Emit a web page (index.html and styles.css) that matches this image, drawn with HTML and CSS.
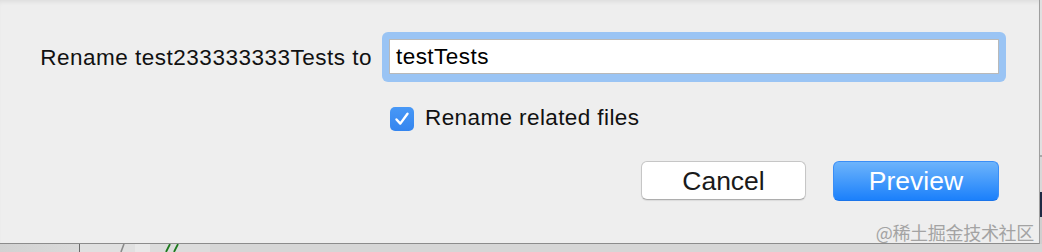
FILE: index.html
```html
<!DOCTYPE html>
<html>
<head>
<meta charset="utf-8">
<link rel="stylesheet" href="styles.css">
</head>
<body>
<div class="screen">
  <div class="top">
    <div class="dialog">
      <div class="rename-row">
        <label class="rename-label">Rename test233333333Tests to</label>
        <div class="focus-ring"><div class="field">testTests</div></div>
      </div>
      <div class="check-row">
        <span class="checkbox"><svg width="24" height="24" viewBox="0 0 24 24"><path d="M6.5 12.5 L10.3 16.6 L17.5 6.8" fill="none" stroke="#fff" stroke-width="2.4" stroke-linecap="round" stroke-linejoin="round"/></svg></span>
        <span class="check-label">Rename related files</span>
      </div>
      <div class="button-row">
        <button class="btn btn-cancel">Cancel</button>
        <button class="btn btn-primary">Preview</button>
      </div>
      <div class="watermark">@稀土掘金技术社区</div>
    </div>
    <div class="side-strip">
      <div class="side-a"></div>
      <div class="side-line"></div>
      <div class="side-b"></div>
      <div class="side-dark"></div>
      <div class="side-c"></div>
    </div>
  </div>
  <div class="under-strip">
    <div class="seg seg-a"></div>
    <div class="seg seg-line"></div>
    <div class="seg seg-b"><svg width="55" height="8" viewBox="0 0 55 8"><path d="M44 0 L41 8" stroke="#8a8a8a" stroke-width="1.6"/></svg></div>
    <div class="seg seg-c"></div>
    <div class="seg seg-d"><svg width="60" height="8" viewBox="0 0 60 8"><path d="M20 0 L16 8 M28 0 L24 8" stroke="#1d7a1d" stroke-width="1.8"/></svg></div>
    <div class="seg seg-e"></div>
  </div>
</div>
</body>
</html>
```

FILE: styles.css
```css
html, body {
  margin: 0;
  padding: 0;
}
body {
  width: 1042px;
  height: 252px;
  overflow: hidden;
  background: #d6d6d6;
  font-family: "Liberation Sans", Arial, sans-serif;
  color: #111;
}
.screen {
  display: flex;
  flex-direction: column;
}
.top {
  display: flex;
}
.dialog {
  position: relative;
  width: 1040px;
  height: 244px;
  box-sizing: border-box;
  background: #eeeeee;
  border-right: 1px solid #9e9e9e;
  border-bottom: 1px solid #8c8c8c;
  box-shadow: inset 0 4px 4px -2px rgba(0,0,0,0.07);
  display: flex;
  flex-direction: column;
  padding-top: 32px;
}
.rename-row {
  display: grid;
  grid-template-columns: 382px 624px;
  align-items: center;
}
.rename-label {
  justify-self: end;
  padding-right: 10px;
  font-size: 22.5px;
  letter-spacing: 0.5px;
  line-height: 26px;
  color: #111;
  position: relative;
  top: 1px;
  white-space: nowrap;
}
.focus-ring {
  background: #9ac4f4;
  border-radius: 6px;
  padding: 7px 7px 8px 7px;
}
.field {
  background: #fff;
  border: 1px solid #b9b9b9;
  height: 33px;
  box-sizing: content-box;
  font-size: 22.5px;
  letter-spacing: 0.45px;
  line-height: 33px;
  padding-left: 6px;
  color: #000;
}
.check-row {
  display: flex;
  align-items: center;
  margin-top: 24px;
  margin-left: 390px;
  gap: 11px;
}
.checkbox {
  width: 24px;
  height: 24px;
  border-radius: 5px;
  background: linear-gradient(#4898f6, #3485ef);
  display: flex;
}
.check-label {
  font-size: 22.5px;
  letter-spacing: 0.4px;
  line-height: 26px;
  color: #111;
  position: relative;
  top: -1px;
}
.button-row {
  display: flex;
  justify-content: flex-end;
  gap: 27px;
  margin-top: 29px;
  padding-right: 40px;
}
.btn {
  font-family: "Liberation Sans", Arial, sans-serif;
  font-size: 26.5px;
  padding: 0;
  margin: 0;
  border-radius: 6px;
  box-sizing: border-box;
  line-height: 36px;
}
.btn-cancel {
  width: 165px;
  height: 39px;
  background: #fff;
  border: 1px solid #c6c6c6;
  border-bottom-color: #adadad;
  box-shadow: 0 1px 1px rgba(0,0,0,0.08);
  color: #1a1a1a;
}
.btn-primary {
  width: 166px;
  height: 40px;
  background: linear-gradient(#6db4fb, #1b80fb);
  border: 1px solid #3a8ef6;
  border-bottom-color: #1a74ea;
  color: #fff;
}
.watermark {
  position: absolute;
  right: 5px;
  bottom: 1px;
  font-family: "Noto Sans CJK SC", "Liberation Sans", sans-serif;
  font-size: 18px;
  line-height: 20px;
  color: #a3a3a3;
  letter-spacing: -0.3px;
}
.side-strip {
  width: 2px;
  display: flex;
  flex-direction: column;
  background: #d2d2d2;
}
.side-a { height: 155px; background: #e0e0e0; }
.side-line { height: 2px; background: #a8a8a8; }
.side-b { height: 35px; background: #d8d8d8; }
.side-dark { height: 25px; background: #1f2a44; }
.side-c { flex: 1; background: #cfcfcf; }
.under-strip {
  display: flex;
  height: 8px;
}
.seg { height: 8px; overflow: hidden; display: flex; }
.seg-a { width: 79px; background: linear-gradient(90deg, #d2d2d2, #dadada); }
.seg-line { width: 1px; background: #6a6a6a; }
.seg-b { width: 55px; background: #e0e0e0; }
.seg-c { width: 15px; background: #e8e8e8; }
.seg-d { width: 60px; background: #dcdcdc; }
.seg-e { flex: 1; background: #d6d6d6; }
```
